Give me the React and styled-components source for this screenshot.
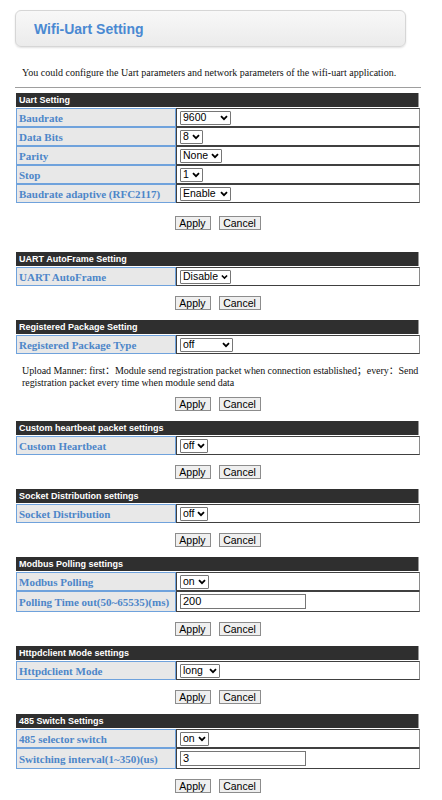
import styled, { createGlobalStyle } from "styled-components";

const GlobalStyle = createGlobalStyle`
  body {
    margin: 0;
    background: #ffffff;
    font-family: "Liberation Serif", "Noto Sans CJK SC", serif;
  }
`;

const Page = styled.div`
  width: 442px;
  padding: 10px 0 0 15px;
  box-sizing: border-box;
`;

const TitleBox = styled.div`
  width: 391px;
  height: 37px;
  box-sizing: border-box;
  border: 1px solid #d6d6d6;
  border-radius: 6px;
  background: linear-gradient(#f8f8f8, #ebebeb);
  box-shadow: 0 1px 2px rgba(0, 0, 0, 0.12);
  display: flex;
  align-items: center;
  padding-left: 18px;
`;

const Title = styled.h1`
  margin: 0;
  font-family: "Liberation Sans", Arial, sans-serif;
  font-size: 14px;
  font-weight: bold;
  color: #4a89d2;
`;

const Intro = styled.p`
  margin: 20px 0 0 7px;
  font-size: 10px;
  line-height: 12px;
  color: #111;
`;

const Rule = styled.div`
  width: 406px;
  height: 1px;
  background: #9e9e9e;
  margin: 8px 0 5px;
`;

const Section = styled.div`
  width: 403px;
  margin-left: 1px;
  margin-bottom: ${(p) => (p.$extra ? "22px" : "10px")};
`;

const Header = styled.div`
  height: 14px;
  line-height: 14px;
  margin-bottom: 1px;
  background: #2f2f2f;
  border-right: 1px solid #9a9a9a;
  padding-left: 3px;
  color: #ffffff;
  font-family: "Liberation Sans", Arial, sans-serif;
  font-size: 9px;
  font-weight: bold;
`;

const Table = styled.table`
  width: 404px;
  border-collapse: separate;
  border-spacing: 0;
`;

const Label = styled.td`
  width: 160px;
  height: ${(p) => (p.$tall ? "21px" : "19px")};
  box-sizing: border-box;
  padding: 0 2px;
  background: #e8e8e8;
  border: 1px solid #6fa2dc;
  color: #4d86c9;
  font-size: 11px;
  line-height: 12px;
  font-weight: bold;
  white-space: nowrap;
`;

const Value = styled.td`
  box-sizing: border-box;
  padding: 0 0 0 3px;
  background: #ffffff;
  border: 1px solid #404040;
  border-right-color: #8a8a8a;
  font-size: 10px;
  line-height: 1;
`;

const SelectBox = styled.span`
  display: inline-flex;
  align-items: center;
  justify-content: space-between;
  gap: 3px;
  width: ${(p) => (p.$w ? `${p.$w}px` : "auto")};
  height: 14px;
  box-sizing: border-box;
  padding: 0 2px;
  border: 1px solid #767676;
  border-radius: 1px;
  background: #ffffff;
  font-family: "Liberation Sans", Arial, sans-serif;
  font-size: 10.5px;
  color: #000;
  vertical-align: middle;
`;

const TextInput = styled.span`
  display: inline-flex;
  align-items: center;
  width: 126px;
  height: 15px;
  box-sizing: border-box;
  padding: 0 2px;
  border: 1px solid #767676;
  font-family: "Liberation Sans", Arial, sans-serif;
  font-size: 11px;
  color: #000;
  vertical-align: middle;
`;

const Buttons = styled.div`
  display: flex;
  justify-content: center;
  gap: 8px;
  margin-top: ${(p) => p.$mt}px;
`;

const Button = styled.span`
  display: inline-flex;
  align-items: center;
  justify-content: center;
  width: ${(p) => p.$w}px;
  height: 14px;
  box-sizing: border-box;
  border: 1px solid #8c8c8c;
  background: #efefef;
  font-family: "Liberation Sans", Arial, sans-serif;
  font-size: 10.5px;
  color: #000;
`;

const Note = styled.p`
  margin: 11px 0 0 6px;
  font-size: 10px;
  line-height: 11.5px;
  letter-spacing: -0.07px;
  color: #111;
  white-space: nowrap;
`;

const Chevron = () => (
  <svg width="8" height="6" viewBox="0 0 8 6">
    <path d="M1 1.2 L4 4.2 L7 1.2" fill="none" stroke="#000" strokeWidth="1.8" />
  </svg>
);

const Select = ({ value, w }) => (
  <SelectBox $w={w}>
    <span>{value}</span>
    <Chevron />
  </SelectBox>
);

const ApplyCancel = ({ mt }) => (
  <Buttons $mt={mt}>
    <Button $w={36}>Apply</Button>
    <Button $w={42}>Cancel</Button>
  </Buttons>
);

const sections = [
  {
    title: "Uart Setting",
    extra: true,
    rows: [
      { label: "Baudrate", select: "9600", w: 51 },
      { label: "Data Bits", select: "8" },
      { label: "Parity", select: "None" },
      { label: "Stop", select: "1" },
      { label: "Baudrate adaptive (RFC2117)", select: "Enable", w: 51 },
    ],
  },
  {
    title: "UART AutoFrame Setting",
    rows: [{ label: "UART AutoFrame", select: "Disable", w: 51 }],
  },
  {
    title: "Registered Package Setting",
    note: true,
    rows: [{ label: "Registered Package Type", select: "off", w: 53 }],
  },
  {
    title: "Custom heartbeat packet settings",
    rows: [{ label: "Custom Heartbeat", select: "off" }],
  },
  {
    title: "Socket Distribution settings",
    rows: [{ label: "Socket Distribution", select: "off" }],
  },
  {
    title: "Modbus Polling settings",
    rows: [
      { label: "Modbus Polling", select: "on" },
      { label: "Polling Time out(50~65535)(ms)", input: "200" },
    ],
  },
  {
    title: "Httpdclient Mode settings",
    rows: [{ label: "Httpdclient Mode", select: "long", w: 40 }],
  },
  {
    title: "485 Switch Settings",
    rows: [
      { label: "485 selector switch", select: "on" },
      { label: "Switching interval(1~350)(us)", input: "3" },
    ],
  },
];

const App = () => (
  <Page>
    <GlobalStyle />
    <TitleBox>
      <Title>Wifi-Uart Setting</Title>
    </TitleBox>
    <Intro>You could configure the Uart parameters and network parameters of the wifi-uart application.</Intro>
    <Rule />
    {sections.map((s) => (
      <Section key={s.title} $extra={s.extra}>
        <Header>{s.title}</Header>
        <Table>
          <tbody>
            {s.rows.map((r) => (
              <tr key={r.label}>
                <Label $tall={!!r.input}>{r.label}</Label>
                <Value>
                  {r.input ? <TextInput>{r.input}</TextInput> : <Select value={r.select} w={r.w} />}
                </Value>
              </tr>
            ))}
          </tbody>
        </Table>
        {s.note && (
          <Note>
            Upload Manner: first：Module send registration packet when connection established；every：Send
            <br />
            registration packet every time when module send data
          </Note>
        )}
        <ApplyCancel mt={s.extra ? 13 : s.note ? 9 : 10} />
      </Section>
    ))}
  </Page>
);

export default App;
